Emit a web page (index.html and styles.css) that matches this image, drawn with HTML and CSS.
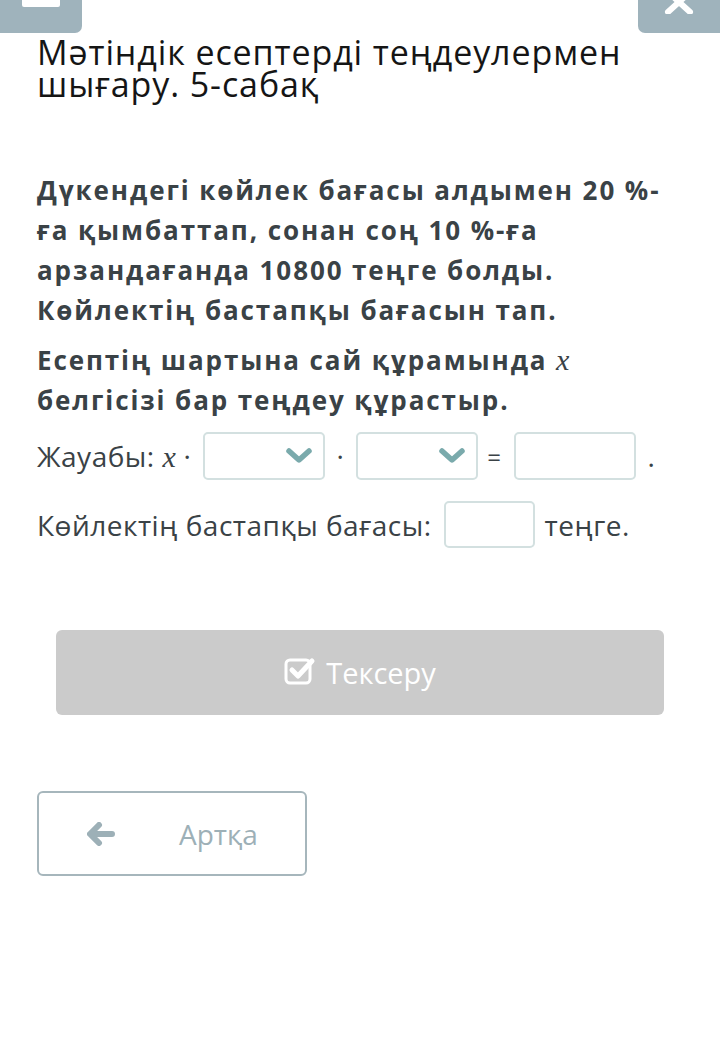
FILE: index.html
```html
<!DOCTYPE html>
<html lang="kk">
<head>
<meta charset="utf-8">
<title>Мәтіндік есептерді теңдеулермен шығару. 5-сабақ</title>
<link rel="stylesheet" href="styles.css">
</head>
<body>
<div class="topbar">
  <div class="tb-btn tb-left"><span class="hamb"></span></div>
  <div class="tb-btn tb-right">
    <svg class="xicon" width="30" height="14" viewBox="0 0 30 14"><path d="M4 -8 L26 12 M26 -8 L4 12" stroke="#fff" stroke-width="6" stroke-linecap="round"/></svg>
  </div>
</div>
<div class="page">
  <h1 class="title">Мәтіндік есептерді теңдеулермен шығару. 5-сабақ</h1>
  <p class="q">Дүкендегі көйлек бағасы алдымен 20 %-<wbr>ға қымбаттап, сонан соң 10 %-ға арзандағанда 10800 теңге болды. Көйлектің бастапқы бағасын тап.</p>
  <p class="q q2">Есептің шартына сай құрамында <span class="mx">x</span> белгісізі бар теңдеу құрастыр.</p>
  <div class="row">
    <span class="lbl">Жауабы: <span class="mx mx-n">x</span> ·</span>
    <div class="sel"><svg width="28" height="18" viewBox="0 0 28 18"><path d="M4 4 L14 13 L24 4" fill="none" stroke="#7aaaac" stroke-width="5.5" stroke-linecap="round" stroke-linejoin="round"/></svg></div>
    <span class="mid">·</span>
    <div class="sel"><svg width="28" height="18" viewBox="0 0 28 18"><path d="M4 4 L14 13 L24 4" fill="none" stroke="#7aaaac" stroke-width="5.5" stroke-linecap="round" stroke-linejoin="round"/></svg></div>
    <span class="eq">=</span>
    <div class="inp"></div>
    <span class="dot">.</span>
  </div>
  <div class="row row2">
    <span class="lbl">Көйлектің бастапқы бағасы:</span>
    <div class="inp inp-s"></div>
    <span>теңге.</span>
  </div>
  <div class="check">
    <svg width="32" height="30" viewBox="0 0 32 30"><rect x="2" y="4" width="24" height="23" rx="4" fill="none" stroke="#fff" stroke-width="3"/><path d="M8 14 L14 20 L28 5" fill="none" stroke="#fff" stroke-width="5" stroke-linecap="round" stroke-linejoin="round"/></svg>
    <span>Тексеру</span>
  </div>
  <div class="back">
    <svg width="28" height="24" viewBox="0 0 28 24"><path d="M12 3 L3 12 L12 21 M4 12 L25 12" fill="none" stroke="#9db0b7" stroke-width="6" stroke-linecap="round" stroke-linejoin="round"/></svg>
    <span>Артқа</span>
  </div>
</div>
</body>
</html>
```

FILE: styles.css
```css
html, body {
  margin: 0;
  padding: 0;
  background: #fff;
}
body {
  font-family: "Open Sans", "Noto Sans", sans-serif;
  color: #3a4246;
}
.topbar {
  display: flex;
  justify-content: space-between;
  height: 33px;
}
.tb-btn {
  width: 82px;
  height: 33px;
  background: #9fb3bc;
  position: relative;
}
.tb-left { border-bottom-right-radius: 7px; }
.tb-right { border-bottom-left-radius: 7px; }
.hamb {
  position: absolute;
  left: 22px;
  top: 0;
  width: 38px;
  height: 7px;
  background: #fff;
  border-radius: 0 0 2px 2px;
}
.xicon {
  position: absolute;
  left: 26px;
  top: 0;
}
.page {
  padding: 0 37px;
}
.title {
  margin: 3px 0 0;
  font-weight: 400;
  font-size: 34px;
  line-height: 32px;
  color: #151515;
  letter-spacing: 0.9px;
}
.q {
  margin: 70px 0 0;
  font-weight: 700;
  font-size: 26px;
  line-height: 40px;
  color: #3a4246;
  letter-spacing: 1.9px;
}
.q2 {
  margin-top: 10px;
}
.mx {
  font-family: "Liberation Serif", "DejaVu Serif", serif;
  font-style: italic;
  font-weight: 400;
  font-size: 30px;
  letter-spacing: 0;
}
.row {
  display: flex;
  align-items: center;
  margin-top: 12px;
  font-size: 28px;
  color: #3a4246;
  letter-spacing: 0.5px;
}
.row > span { white-space: nowrap; }
.sel {
  width: 122px;
  height: 48px;
  border: 2px solid #d3e0e0;
  border-radius: 5px;
  display: flex;
  align-items: center;
  justify-content: flex-end;
  padding-right: 10px;
  box-sizing: border-box;
  margin-left: 12px;
}
.mid { margin: 0 0 0 11px; }
.eq { margin: 0 12px 0 9px; font-size: 24px; }
.inp {
  width: 122px;
  height: 48px;
  border: 2px solid #d3e0e0;
  border-radius: 5px;
  box-sizing: border-box;
}
.dot { margin-left: 12px; }
.row2 {
  margin-top: 21px;
}
.inp-s {
  width: 91px;
  height: 47px;
  margin: 0 10px 0 12px;
}
.check {
  margin: 82px 19px 0;
  height: 85px;
  background: #cbcbcb;
  border-radius: 6px;
  display: flex;
  align-items: center;
  justify-content: center;
  gap: 10px;
  color: #fff;
  font-size: 29px;
}
.check svg { margin-top: -4px; }
.back {
  margin-top: 76px;
  width: 270px;
  height: 85px;
  box-sizing: border-box;
  border: 2px solid #a6b6bc;
  border-radius: 6px;
  display: flex;
  align-items: center;
  padding-left: 48px;
  gap: 64px;
  color: #9db0b7;
  font-size: 28px;
}
```
